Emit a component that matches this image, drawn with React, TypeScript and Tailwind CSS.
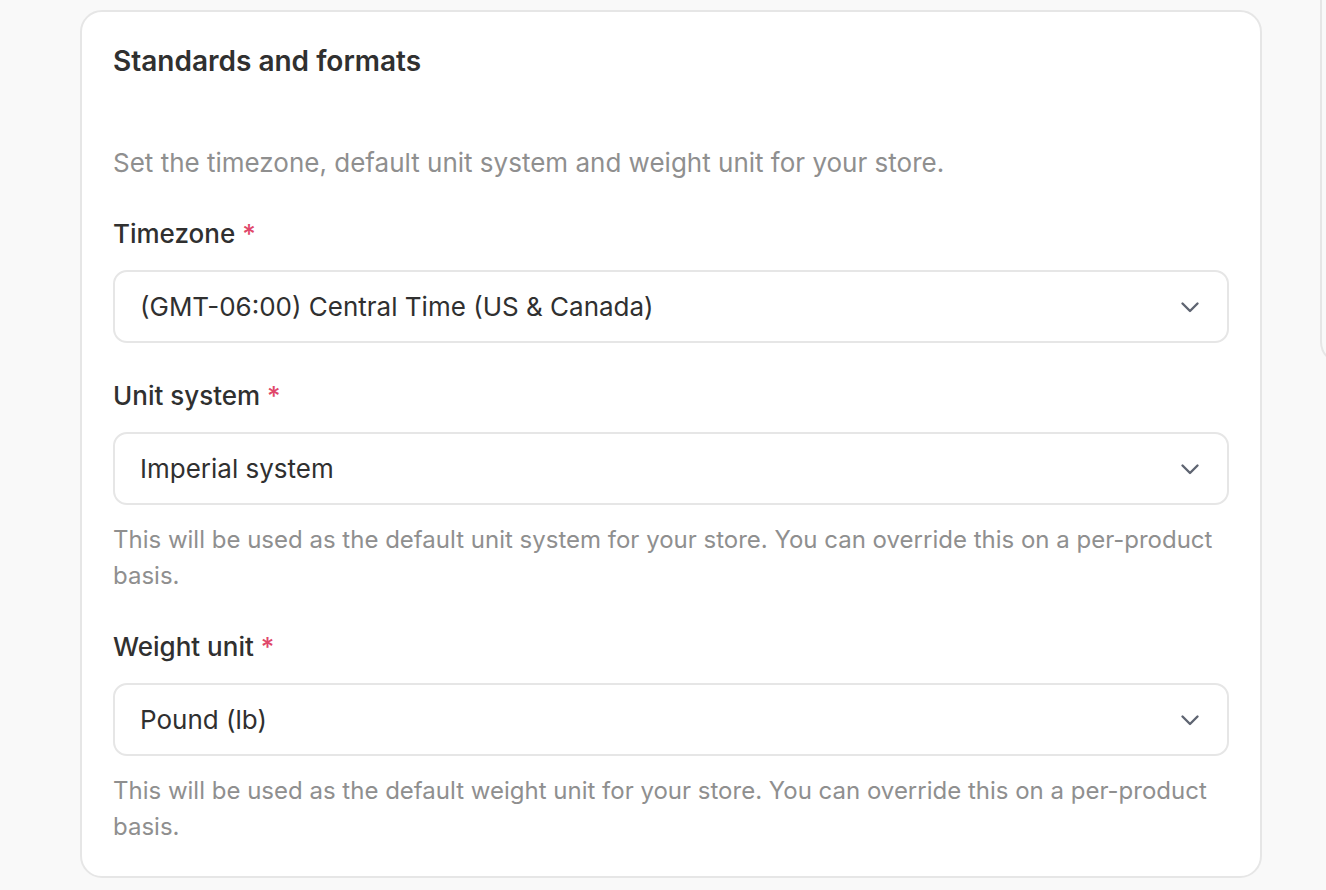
import React from "react";

function Chevron() {
  return (
    <svg width="22" height="22" viewBox="0 0 22 22" fill="none" className="text-[#5f6572]">
      <path d="M3.5 7.5L11 15l7.5-7.5" stroke="currentColor" strokeWidth="2.4" strokeLinecap="round" strokeLinejoin="round" />
    </svg>
  );
}

function Field({ label, value, help }: { label: string; value: string; help?: string }) {
  return (
    <div className="flex flex-col">
      <label className="text-[26px] leading-[36px] font-medium text-[#303030]">
        {label} <span className="text-[#e0476a]">*</span>
      </label>
      <div className="mt-[18px] h-[73px] flex items-center justify-between rounded-[14px] border-2 border-[#e6e6e6] bg-white pl-[25px] pr-[26px]">
        <span className="text-[26px] text-[#303030]">{value}</span>
        <Chevron />
      </div>
      {help && <p className="mt-[17px] text-[24px] leading-[36px] text-[#8f8f8f]">{help}</p>}
    </div>
  );
}

export default function App() {
  return (
    <div
      className="w-[1326px] h-[890px] overflow-hidden bg-[#f9f9f9] flex gap-[58px] pl-[80px] pt-[10px]"
      style={{ fontFamily: "Inter, 'Noto Sans', sans-serif" }}
    >
      <div className="w-[1182px] h-[868px] shrink-0 rounded-[22px] border-2 border-[#e6e6e6] bg-white px-[31px] pt-[31px]">
        <h2 className="text-[28px] leading-[36px] font-semibold text-[#303030]">Standards and formats</h2>
        <p className="mt-[66px] text-[26px] leading-[36px] text-[#8f8f8f]">
          Set the timezone, default unit system and weight unit for your store.
        </p>
        <div className="mt-[35px] flex flex-col gap-[35px]">
          <Field label="Timezone" value="(GMT-06:00) Central Time (US & Canada)" />
          <Field
            label="Unit system"
            value="Imperial system"
            help="This will be used as the default unit system for your store. You can override this on a per-product basis."
          />
          <Field
            label="Weight unit"
            value="Pound (lb)"
            help="This will be used as the default weight unit for your store. You can override this on a per-product basis."
          />
        </div>
      </div>
      <div className="w-[300px] h-[364px] -mt-[10px] shrink-0 rounded-bl-[22px] border-l-2 border-b-2 border-[#e6e6e6] bg-[#f9f9f9]" />
    </div>
  );
}
